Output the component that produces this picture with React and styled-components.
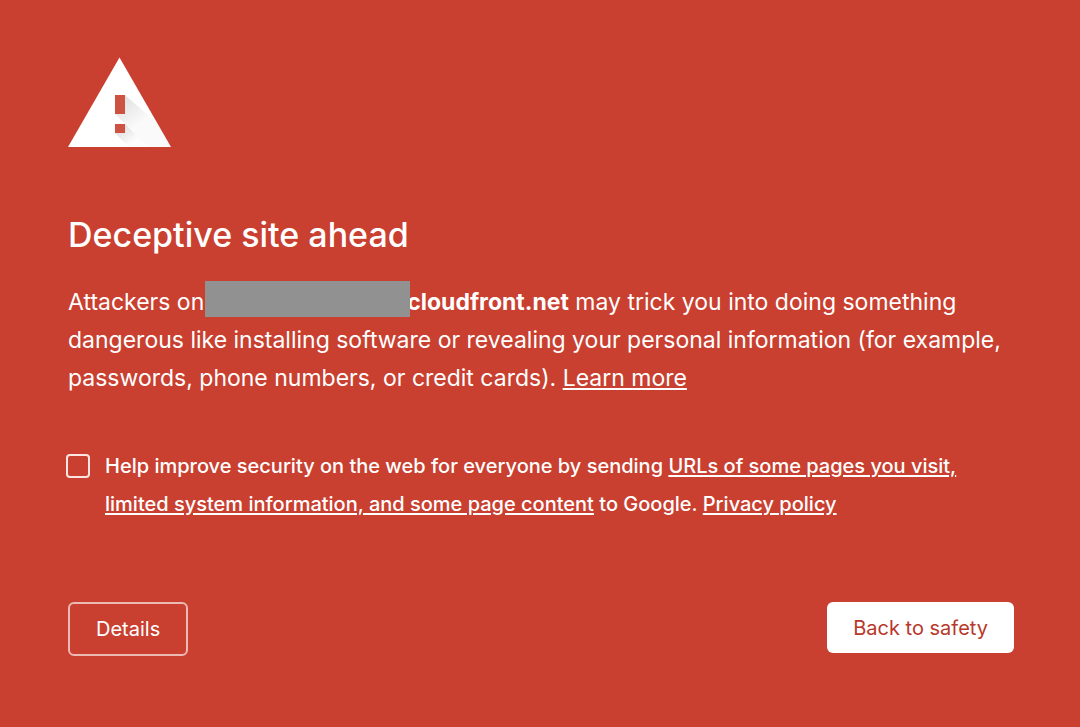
import React from "react";
import styled, { createGlobalStyle } from "styled-components";

const GlobalStyle = createGlobalStyle`
  * { box-sizing: border-box; }
  body { margin: 0; background: #c93f30; color: #fff; font-family: Inter, "Liberation Sans", sans-serif; }
`;

const Page = styled.main`
  padding: 57px 66px 70px 68px;
`;

const WarningIcon = styled.svg`
  display: block;
  width: 103px;
  height: 90px;
`;

const Title = styled.h1`
  margin: 64px 0 0;
  font-size: 34px;
  line-height: 48px;
  font-weight: 500;
`;

const Message = styled.p`
  margin: 24px 0 0;
  font-size: 23px;
  line-height: 38px;
`;

const Redacted = styled.span`
  display: inline-block;
  position: relative;
  width: 205px;
  height: 36px;
  margin: -8px -3px 0 1px;
  vertical-align: -7px;
  background: #919191;
`;

const Link = styled.a`
  color: inherit;
  text-decoration: underline;
  text-decoration-thickness: 2px;
  text-underline-offset: 2px;
`;

const OptIn = styled.div`
  display: flex;
  align-items: flex-start;
  gap: 15px;
  margin-top: 50px;
`;

const Checkbox = styled.input`
  appearance: none;
  flex: none;
  width: 24px;
  height: 24px;
  margin: 7px 0 0 -2px;
  border: 2px solid #fbe4e1;
  border-radius: 4px;
`;

const OptInLabel = styled.label`
  font-size: 20px;
  font-weight: 500;
  line-height: 38px;
`;

const Actions = styled.div`
  display: flex;
  justify-content: space-between;
  align-items: flex-start;
  margin-top: 79px;
`;

const Button = styled.button`
  padding: 0 26px;
  height: ${(p) => (p.$primary ? 51 : 54)}px;
  border: ${(p) => (p.$primary ? "0" : "2px solid #edb9b3")};
  border-radius: 6px;
  background: ${(p) => (p.$primary ? "#fff" : "transparent")};
  color: ${(p) => (p.$primary ? "#b8372a" : "#fff")};
  font: 400 20px Inter, "Liberation Sans", sans-serif;
`;

export default function App() {
  return (
    <Page>
      <GlobalStyle />
      <WarningIcon viewBox="0 0 103 90" aria-hidden="true">
        <defs>
          <linearGradient id="longShadow" gradientUnits="userSpaceOnUse" x1="50" y1="45" x2="68" y2="69">
            <stop offset="0" stopColor="#000" stopOpacity="0.12" />
            <stop offset="1" stopColor="#000" stopOpacity="0.02" />
          </linearGradient>
          <linearGradient id="dotShadow" gradientUnits="userSpaceOnUse" x1="51" y1="70" x2="63" y2="86">
            <stop offset="0" stopColor="#000" stopOpacity="0.14" />
            <stop offset="1" stopColor="#000" stopOpacity="0.01" />
          </linearGradient>
        </defs>
        <path d="M51.5 0.5 103 90H0Z" fill="#fff" />
        <path d="M57 38 89 66 103 90H80L57 67 47 57H57Z" fill="url(#longShadow)" />
        <path d="M57 67 80 90H61L47 76H57Z" fill="url(#dotShadow)" />
        <path d="M47 38h10v19H47zM47 67h10v9H47z" fill="#cf5142" />
      </WarningIcon>
      <Title>Deceptive site ahead</Title>
      <Message>
        Attackers on
        <Redacted />
        <strong>cloudfront.net</strong> may trick you into doing something dangerous like installing
        software or revealing your personal information (for example, passwords, phone numbers, or
        credit cards). <Link href="#learn">Learn more</Link>
      </Message>
      <OptIn>
        <Checkbox type="checkbox" id="opt-in" />
        <OptInLabel htmlFor="opt-in">
          Help improve security on the web for everyone by sending{" "}
          <Link href="#data">
            URLs of some pages you visit, limited system information, and some page content
          </Link>{" "}
          to Google. <Link href="#privacy">Privacy policy</Link>
        </OptInLabel>
      </OptIn>
      <Actions>
        <Button type="button">Details</Button>
        <Button type="button" $primary>Back to safety</Button>
      </Actions>
    </Page>
  );
}
